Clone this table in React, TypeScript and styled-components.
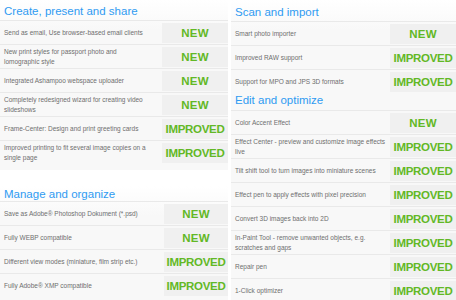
import styled, { createGlobalStyle } from "styled-components";

const GlobalStyle = createGlobalStyle`
	html, body {
		margin: 0;
		padding: 0;
		background: #ffffff;
		font-family: "Liberation Sans", Arial, sans-serif;
	}
`;

type Status = "NEW" | "IMPROVED";

interface Feature {
	text: string;
	status: Status;
}

interface Section {
	title: string;
	items: Array<Feature>;
}

const createShare: Section = {
	title: "Create, present and share",
	items: [
		{ text: "Send as email, Use browser-based email clients", status: "NEW" },
		{
			text: "New print styles for passport photo and lomographic style",
			status: "NEW",
		},
		{ text: "Integrated Ashampoo webspace uploader", status: "NEW" },
		{
			text: "Completely redesigned wizard for creating video slideshows",
			status: "NEW",
		},
		{ text: "Frame-Center: Design and print greeting cards", status: "IMPROVED" },
		{
			text: "Improved printing to fit several image copies on a single page",
			status: "IMPROVED",
		},
	],
};

const manage: Section = {
	title: "Manage and organize",
	items: [
		{ text: "Save as Adobe® Photoshop Dokument (*.psd)", status: "NEW" },
		{ text: "Fully WEBP compatible", status: "NEW" },
		{
			text: "Different view modes (miniature, film strip etc.)",
			status: "IMPROVED",
		},
		{ text: "Fully Adobe® XMP compatible", status: "IMPROVED" },
	],
};

const scan: Section = {
	title: "Scan and import",
	items: [
		{ text: "Smart photo importer", status: "NEW" },
		{ text: "Improved RAW support", status: "IMPROVED" },
		{ text: "Support for MPO and JPS 3D formats", status: "IMPROVED" },
	],
};

const edit: Section = {
	title: "Edit and optimize",
	items: [
		{ text: "Color Accent Effect", status: "NEW" },
		{
			text: "Effect Center - preview and customize image effects live",
			status: "IMPROVED",
		},
		{
			text: "Tilt shift tool to turn images into miniature scenes",
			status: "IMPROVED",
		},
		{
			text: "Effect pen to apply effects with pixel precision",
			status: "IMPROVED",
		},
		{ text: "Convert 3D images back into 2D", status: "IMPROVED" },
		{
			text: "In-Paint Tool - remove unwanted objects, e.g. scratches and gaps",
			status: "IMPROVED",
		},
		{ text: "Repair pen", status: "IMPROVED" },
		{ text: "1-Click optimizer", status: "IMPROVED" },
	],
};

const Page = styled.div`
	display: grid;
	grid-template-columns: 228px 1fr;
	column-gap: 3px;
	width: 456px;
	height: 300px;
	overflow: hidden;
`;

const Column = styled.div`
	display: flex;
	flex-direction: column;
	gap: 16px;
`;

const Panel = styled.div<{ $top: number; $bottom: number }>`
	background: linear-gradient(#ffffff, #f8f8f8 30px, #f8f8f8);
	padding: ${(p) => p.$top}px 0 ${(p) => p.$bottom}px 0;
`;

const Heading = styled.h2<{ $space: number }>`
	margin: 0;
	padding: 0 0 0 4px;
	height: ${(p) => p.$space}px;
	font-size: 11.5px;
	line-height: 14px;
	font-weight: normal;
	color: #2f9bf2;
`;

const Row = styled.div<{ $badge: number; $gap: number }>`
	display: grid;
	grid-template-columns: 1fr ${(p) => p.$badge}px;
	column-gap: ${(p) => p.$gap}px;
	padding: 2px 0 1px 4px;
	min-height: 20px;
	border-top: 1px solid #e9e9e9;
`;

const Text = styled.div`
	align-self: center;
	font-size: 6.5px;
	line-height: 10px;
	color: #6e6e6e;
`;

const Badge = styled.div<{ $status: Status }>`
	display: flex;
	align-items: center;
	justify-content: center;
	background: #f0f0f0;
	font-size: 11.5px;
	font-weight: bold;
	letter-spacing: ${(p) => (p.$status === "NEW" ? "0.2px" : "-0.3px")};
	color: #62b826;
`;

function FeatureList({
	section,
	space,
	badge,
	gap,
}: {
	section: Section;
	space: number;
	badge: number;
	gap: number;
}) {
	return (
		<>
			<Heading $space={space}>{section.title}</Heading>
			{section.items.map((item) => (
				<Row key={item.text} $badge={badge} $gap={gap}>
					<Text>{item.text}</Text>
					<Badge $status={item.status}>{item.status}</Badge>
				</Row>
			))}
		</>
	);
}

export default function App() {
	return (
		<>
			<GlobalStyle />
			<Page>
				<Column>
					<Panel $top={4} $bottom={6}>
						<FeatureList section={createShare} space={16} badge={66} gap={12} />
					</Panel>
					<Panel $top={1} $bottom={4}>
						<FeatureList section={manage} space={14} badge={64} gap={4} />
					</Panel>
				</Column>
				<Column>
					<Panel $top={5} $bottom={0}>
						<FeatureList section={scan} space={16} badge={66} gap={1} />
						<FeatureList section={edit} space={17} badge={66} gap={1} />
					</Panel>
				</Column>
			</Page>
		</>
	);
}
